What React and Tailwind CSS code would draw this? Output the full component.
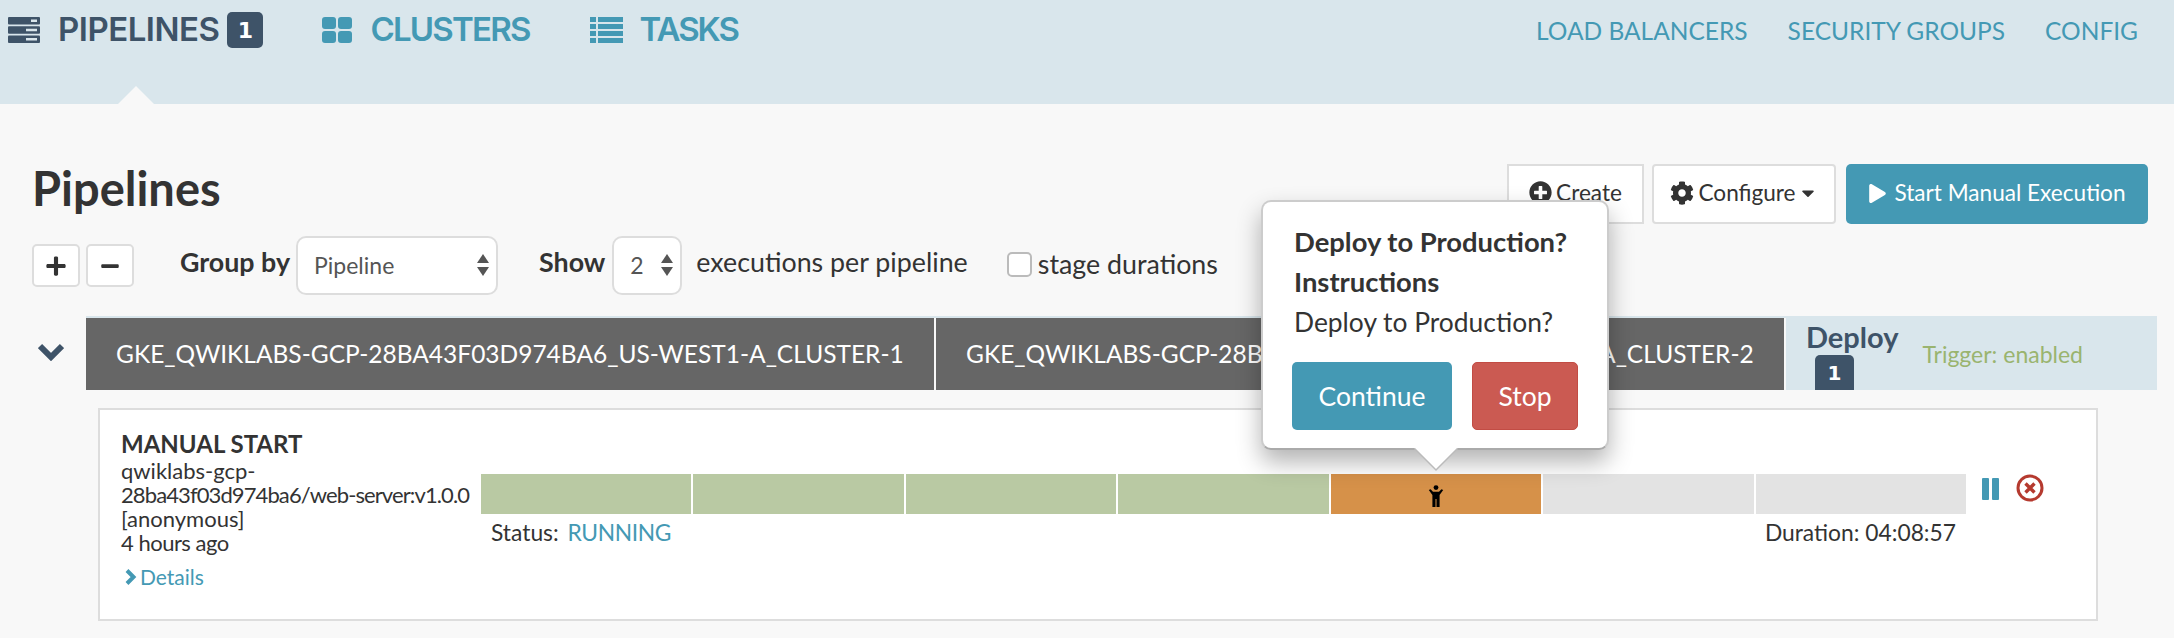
import { FaPlusCircle, FaCog, FaPlay, FaCaretDown, FaPlus, FaMinus } from 'react-icons/fa'

const teal = 'text-[#4499b4]'

function ServerIcon() {
  return (
    <svg width="32" height="26" viewBox="0 0 32 26" className="text-[#3e5368]">
      <rect y="0" width="32" height="7.5" rx="1" fill="currentColor" />
      <rect y="9.25" width="32" height="7.5" rx="1" fill="currentColor" />
      <rect y="18.5" width="32" height="7.5" rx="1" fill="currentColor" />
      <rect x="23" y="2.5" width="6" height="2.5" fill="#d9e6ec" />
      <rect x="18" y="11.75" width="11" height="2.5" fill="#d9e6ec" />
      <rect x="18" y="21" width="11" height="2.5" fill="#d9e6ec" />
    </svg>
  )
}

function GridIcon() {
  return (
    <svg width="30" height="26" viewBox="0 0 30 26" className={teal}>
      <rect x="0" y="0" width="14" height="12" rx="3" fill="currentColor" />
      <rect x="16" y="0" width="14" height="12" rx="3" fill="currentColor" />
      <rect x="0" y="14" width="14" height="12" rx="3" fill="currentColor" />
      <rect x="16" y="14" width="14" height="12" rx="3" fill="currentColor" />
    </svg>
  )
}

function ListIcon() {
  return (
    <svg width="33" height="26" viewBox="0 0 33 26" className={teal}>
      {[0, 7, 14, 21].map((y) => (
        <g key={y} fill="currentColor">
          <rect x="0" y={y} width="6" height="5" />
          <rect x="8" y={y} width="25" height="5" />
        </g>
      ))}
    </svg>
  )
}

function PersonIcon() {
  return (
    <svg width="16" height="22" viewBox="0 0 16 22" fill="#000" className="mt-[4px]">
      <circle cx="8" cy="2.6" r="2.4" />
      <path d="M0.8 5 L2.6 4.2 L5 6.8 H11 L13.4 4.2 L15.2 5 L11.6 10 V22 H8.5 V14 H7.5 V22 H4.4 V10 Z" />
    </svg>
  )
}

function SelectArrows() {
  return (
    <svg width="12" height="22" viewBox="0 0 12 22" fill="#555" className="absolute right-[9px] top-[18px] pointer-events-none">
      <path d="M6 0 L12 9 H0 Z" />
      <path d="M6 22 L12 13 H0 Z" />
    </svg>
  )
}

function Segment({ color }) {
  return <div className={`flex-1 h-full ${color}`} />
}

export default function App() {
  return (
    <div className="relative w-[2174px] h-[638px] overflow-hidden bg-[#f8f8f8] text-[#333] font-['Lato','Noto_Sans',sans-serif]">
      {/* top nav */}
      <header className="relative h-[104px] bg-[#d9e6ec] flex justify-between items-start">
        <nav className="flex items-center pl-[8px] pt-[6px] h-[48px] box-content text-[33px] font-semibold font-['Inter',sans-serif]">
          <ServerIcon />
          <span className="ml-[18px] text-[#3e5368] tracking-[-0.5px]">PIPELINES</span>
          <span className="ml-[8px] w-[36px] h-[36px] rounded-[5px] bg-[#3e5368] text-white text-[22px] flex items-center justify-center font-['DejaVu_Sans',sans-serif] font-bold">1</span>
          <span className="ml-[59px]"><GridIcon /></span>
          <span className={`ml-[18px] tracking-[-1.8px] ${teal}`}>CLUSTERS</span>
          <span className="ml-[60px]"><ListIcon /></span>
          <span className={`ml-[17px] tracking-[-2px] ${teal}`}>TASKS</span>
        </nav>
        <nav className={`flex gap-[40px] pr-[36px] pt-[13px] text-[24.5px] ${teal}`}>
          <a>LOAD BALANCERS</a>
          <a>SECURITY GROUPS</a>
          <a>CONFIG</a>
        </nav>
        <div className="absolute left-[118px] bottom-0 w-0 h-0 border-x-[18px] border-x-transparent border-b-[18px] border-b-[#f8f8f8]" />
      </header>

      <main>
        <div className="flex justify-between items-start pl-[32px] pr-[26px] pt-[60px]">
          <h1 className="text-[47px] leading-[56px] font-bold text-[#333] mt-[-4px]">Pipelines</h1>
          <div className="flex items-start text-[22.6px]">
            <button className="w-[137px] h-[60px] bg-white border-2 border-[#ddd] flex items-center justify-center gap-[4px] pb-[3px]">
              <FaPlusCircle size={23} />
              Create
            </button>
            <button className="ml-[8px] w-[184px] h-[60px] bg-white border-2 border-[#ddd] rounded-[4px] flex items-center justify-center gap-[4px] pb-[3px]">
              <FaCog size={24} />
              Configure
              <FaCaretDown size={20} className="-ml-[2px]" />
            </button>
            <button className="ml-[10px] w-[302px] h-[60px] bg-[#4499b4] text-white rounded-[5px] flex items-center justify-center gap-[7px] pb-[2px]">
              <FaPlay size={19} />
              Start Manual Execution
            </button>
          </div>
        </div>

        {/* controls */}
        <div className="flex items-start pl-[32px] mt-[12px] text-[26.8px]">
          <button className="mt-[8px] w-[48px] h-[43px] bg-white border-2 border-[#ddd] rounded-[5px] flex items-center justify-center">
            <FaPlus size={22} />
          </button>
          <button className="mt-[8px] ml-[6px] w-[48px] h-[43px] bg-white border-2 border-[#ddd] rounded-[5px] flex items-center justify-center">
            <FaMinus size={20} />
          </button>
          <span className="ml-[46px] font-bold leading-[59px] mt-[-3px]">Group by</span>
          <div className="relative ml-[6px]">
            <select className="appearance-none w-[202px] h-[59px] bg-white border-2 border-[#ddd] rounded-[10px] pl-[16px] text-[23px] text-[#555]">
              <option>Pipeline</option>
            </select>
            <SelectArrows />
          </div>
          <span className="ml-[41px] font-bold leading-[59px] mt-[-3px]">Show</span>
          <div className="relative ml-[7px]">
            <select className="appearance-none w-[70px] h-[59px] bg-white border-2 border-[#ddd] rounded-[10px] pl-[16px] text-[23px] text-[#555]">
              <option>2</option>
            </select>
            <SelectArrows />
          </div>
          <span className="ml-[14px] leading-[59px] mt-[-3px]">executions per pipeline</span>
          <span className="ml-[39px] h-[56px] flex items-center">
            <input type="checkbox" className="appearance-none w-[25px] h-[25px] bg-white border-2 border-[#bbb] rounded-[5px]" />
            <span className="ml-[6px]">stage durations</span>
          </span>
        </div>

        {/* pipeline group */}
        <div className="flex items-start mt-[21px] pr-[17px]">
          <div className="w-[86px] pl-[38px] pt-[27px]">
            <svg width="26" height="18" viewBox="0 0 26 18" fill="none" stroke="#3e5368" strokeWidth="6">
              <path d="M2 3 L13 14 L24 3" />
            </svg>
          </div>
          <div className="flex-1 h-[74px] border-t-2 border-[#d9e6ec] flex text-white text-[24.5px]">
            <div className="w-[848px] bg-[#666] pl-[30px] flex items-center whitespace-nowrap">GKE_QWIKLABS-GCP-28BA43F03D974BA6_US-WEST1-A_CLUSTER-1</div>
            <div className="ml-[2px] w-[848px] bg-[#666] pl-[30px] flex items-center whitespace-nowrap">GKE_QWIKLABS-GCP-28BA43F03D974BA6_US-WEST1-A_CLUSTER-2</div>
            <div className="ml-[2px] flex-1 bg-[#d9e6ec] flex pl-[20px]">
              <div className="flex flex-col">
                <span className="text-[#3e5368] text-[29px] leading-[38px] font-bold">Deploy</span>
                <span className="ml-[9px] mt-[-1px] w-[39px] h-[36px] rounded-t-[5px] bg-[#3e5368] text-white text-[20px] flex items-center justify-center font-['DejaVu_Sans',sans-serif] font-bold">1</span>
              </div>
              <span className="ml-[24px] mt-[19px] text-[#9ab46f] text-[23px]">Trigger: enabled</span>
            </div>
          </div>
        </div>

        {/* execution card */}
        <div className="ml-[98px] mt-[18px] w-[2000px] h-[213px] bg-white border-2 border-[#ddd] flex items-start pl-[21px] text-[22px]">
          <div className="w-[360px] pt-[21px] leading-[24px]">
            <div className="text-[24px] leading-[26px] font-bold mb-[2px]">MANUAL START</div>
            <div>qwiklabs-gcp-</div>
            <div className="whitespace-nowrap tracking-[-0.9px]">28ba43f03d974ba6/web-server:v1.0.0</div>
            <div>[anonymous]</div>
            <div className="tracking-[-0.5px]">4 hours ago</div>
            <div className={`flex items-center mt-[10px] ml-[4px] ${teal}`}>
              <svg width="12" height="16" viewBox="0 0 12 16" fill="none" stroke="currentColor" strokeWidth="4">
                <path d="M2 1.5 L8.5 8 L2 14.5" />
              </svg>
              <span className="ml-[3px] text-[21px]">Details</span>
            </div>
          </div>
          <div className="w-[1485px] mt-[64px]">
            <div className="h-[40px] flex gap-[2px]">
              <Segment color="bg-[#b9c9a3]" />
              <Segment color="bg-[#b9c9a3]" />
              <Segment color="bg-[#b9c9a3]" />
              <Segment color="bg-[#b9c9a3]" />
              <div className="flex-1 h-full bg-[#d69149] flex items-center justify-center"><PersonIcon /></div>
              <Segment color="bg-[#e3e3e3]" />
              <Segment color="bg-[#e3e3e3]" />
            </div>
            <div className="flex justify-between px-[10px] mt-[1px] text-[22.8px]">
              <span>Status: <span className={`ml-[3px] tracking-[-0.4px] ${teal}`}>RUNNING</span></span>
              <span>Duration: 04:08:57</span>
            </div>
          </div>
          <div className="flex items-start mt-[64px] ml-[16px]">
            <div className="flex gap-[3px] mt-[4px]">
              <div className="w-[7px] h-[22px] bg-[#4499b4] rounded-[1px]" />
              <div className="w-[7px] h-[22px] bg-[#4499b4] rounded-[1px]" />
            </div>
            <svg width="28" height="28" viewBox="0 0 28 28" className="ml-[17px]">
              <circle cx="14" cy="14" r="12" fill="none" stroke="#b53a2f" strokeWidth="3" />
              <path d="M9.5 9.5 L18.5 18.5 M18.5 9.5 L9.5 18.5" stroke="#b53a2f" strokeWidth="3.4" />
            </svg>
          </div>
        </div>
      </main>

      {/* popover */}
      <div className="absolute left-[1261px] top-[200px] w-[348px] h-[250px] bg-white border-2 border-[#ccc] border-b-[#aaa] rounded-[10px] shadow-[0_12px_24px_rgba(0,0,0,0.3)] pl-[31px] pt-[20px] text-[26.4px] leading-[40px]">
        <div className="font-bold text-[27.4px] whitespace-nowrap">Deploy to Production?</div>
        <div className="font-bold text-[27.4px]">Instructions</div>
        <div className="whitespace-nowrap">Deploy to Production?</div>
        <div className="flex mt-[20px] -ml-[2px] text-[26.5px]">
          <button className="w-[160px] h-[68px] bg-[#4499b4] text-white rounded-[5px]">Continue</button>
          <button className="ml-[20px] w-[106px] h-[68px] bg-[#cb5a52] border border-[#c24c44] text-white rounded-[5px]">Stop</button>
        </div>
        <svg width="44" height="24" viewBox="0 0 44 24" className="absolute left-[151px] top-[246px]">
          <path d="M0 0 L22 22 L44 0" fill="#fff" stroke="#bbb" strokeWidth="1.5" />
        </svg>
      </div>
    </div>
  )
}
